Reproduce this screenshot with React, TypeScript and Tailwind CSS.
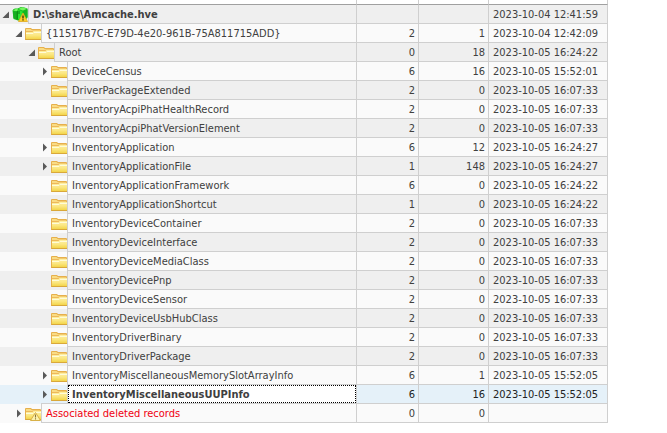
import React from "react";

type Kind = "hive" | "folder" | "deleted";

interface Entry {
  level: 0 | 1 | 2 | 3;
  name: string;
  values: string;
  subkeys: string;
  modified: string;
  kind?: Kind;
  state?: "open" | "closed";
  selected?: boolean;
}

const key = (
  name: string,
  values: string,
  subkeys: string,
  modified: string,
  extra: Partial<Entry> = {},
): Entry => ({ level: 3, name, values, subkeys, modified, ...extra });

const entries: Entry[] = [
  key("D:\\share\\Amcache.hve", "", "", "2023-10-04 12:41:59", { level: 0, kind: "hive", state: "open" }),
  key("{11517B7C-E79D-4e20-961B-75A811715ADD}", "2", "1", "2023-10-04 12:42:09", { level: 1, state: "open" }),
  key("Root", "0", "18", "2023-10-05 16:24:22", { level: 2, state: "open" }),
  key("DeviceCensus", "6", "16", "2023-10-05 15:52:01", { state: "closed" }),
  key("DriverPackageExtended", "2", "0", "2023-10-05 16:07:33"),
  key("InventoryAcpiPhatHealthRecord", "2", "0", "2023-10-05 16:07:33"),
  key("InventoryAcpiPhatVersionElement", "2", "0", "2023-10-05 16:07:33"),
  key("InventoryApplication", "6", "12", "2023-10-05 16:24:27", { state: "closed" }),
  key("InventoryApplicationFile", "1", "148", "2023-10-05 16:24:27", { state: "closed" }),
  key("InventoryApplicationFramework", "6", "0", "2023-10-05 16:24:22"),
  key("InventoryApplicationShortcut", "1", "0", "2023-10-05 16:24:22"),
  key("InventoryDeviceContainer", "2", "0", "2023-10-05 16:07:33"),
  key("InventoryDeviceInterface", "2", "0", "2023-10-05 16:07:33"),
  key("InventoryDeviceMediaClass", "2", "0", "2023-10-05 16:07:33"),
  key("InventoryDevicePnp", "2", "0", "2023-10-05 16:07:33"),
  key("InventoryDeviceSensor", "2", "0", "2023-10-05 16:07:33"),
  key("InventoryDeviceUsbHubClass", "2", "0", "2023-10-05 16:07:33"),
  key("InventoryDriverBinary", "2", "0", "2023-10-05 16:07:33"),
  key("InventoryDriverPackage", "2", "0", "2023-10-05 16:07:33"),
  key("InventoryMiscellaneousMemorySlotArrayInfo", "6", "1", "2023-10-05 15:52:05", { state: "closed" }),
  key("InventoryMiscellaneousUUPInfo", "6", "16", "2023-10-05 15:52:05", { state: "closed", selected: true }),
  key("Associated deleted records", "0", "0", "", { level: 1, kind: "deleted", state: "closed" }),
];

const indents = ["pl-0", "pl-[13px]", "pl-[26px]", "pl-[39px]"];

function Folder({ warning = false }: { warning?: boolean }) {
  return (
    <svg viewBox="0 0 16 16" className="mt-px size-4 shrink-0" aria-hidden="true">
      <defs>
        <linearGradient id="folderFront" x1="0" y1="0" x2="0" y2="1">
          <stop offset="0" stopColor="#fdf0a4" />
          <stop offset="0.5" stopColor="#fbe783" />
          <stop offset="1" stopColor="#f2d342" />
        </linearGradient>
      </defs>
      <path d="M0 4 Q0 3 1 3 H6 L7 4 H15 Q16 4 16 5 V15 H0 Z" fill="#e6b04c" />
      <path d="M1 5 V4 H5.5 L6.5 5 H15 V6 H1 Z" fill="#f9dc84" />
      <path d="M1 6 H7 L8 5.5 H16 V7 H1 Z" fill="#eeb75a" />
      <path d="M1 8 V7 H7.5 L8.5 6 H16 V14.5 H1 Z" fill="url(#folderFront)" />
      <path d="M1 8.5 H8 L9 7.5 H16" fill="none" stroke="#fffbd8" strokeWidth="1" />
      <path d="M0.5 14.5 H16" stroke="#d9a83a" strokeWidth="1" />
      {warning && (
        <>
          <path d="M10.5 7.5 L15.5 15.5 H5.5 Z" fill="#fdf3ae" stroke="#d8b148" strokeWidth="1" strokeLinejoin="round" />
          <path d="M10.5 9.5 V12.5 M10.5 13.3 V14.5" stroke="#8a7438" strokeWidth="1.1" />
        </>
      )}
    </svg>
  );
}

function Hive() {
  return (
    <svg viewBox="0 0 16 16" className="mt-px size-4 shrink-0" aria-hidden="true">
      <path d="M0.5 4.5 Q1 3 3 2.5 L5.5 2.5 L9 1 Q12 0.8 15.5 2.5 V12 L11 15 L6 14.5 L1.5 13 Z" fill="#19c321" />
      <path d="M1 4.5 L4 2.8 L6 3.3 L5 5.3 Z M6.5 3 L10 1.2 L15 2.8 L11 4.6 Z" fill="#78f560" />
      <path d="M1 5 L4.5 6 V13.5 L1.5 12 Z" fill="#18ad22" />
      <path d="M6 4 L10.5 5.5 V14 L6 13 Z" fill="#2be431" />
      <path d="M11 5.3 L15.5 3.2 V11 L11 14 Z" fill="#16b522" />
      <path d="M5.2 5 V13.5" fill="none" stroke="#077412" strokeWidth="0.9" />
      <path d="M7 5 V8" fill="none" stroke="#077412" strokeWidth="0.9" />
      <path d="M11 7 L15.5 15.5 H6.5 Z" fill="#ffd02a" stroke="#e0a81c" strokeWidth="0.8" strokeLinejoin="round" />
      <path d="M11 9.5 V12.6 M11 13.3 V14.6" stroke="#2c2508" strokeWidth="1.3" />
    </svg>
  );
}

function Expander({ state, name }: { state?: "open" | "closed"; name: string }) {
  if (!state) return <span className="w-3 shrink-0" />;
  return (
    <button
      type="button"
      aria-label={name}
      aria-expanded={state === "open"}
      className="mt-px flex w-3 shrink-0 items-center"
    >
      <svg viewBox="0 0 12 16" className="h-4 w-3" aria-hidden="true">
        {state === "open" ? (
          <path d="M9 5.5 V12 H2.5 Z" fill="#595959" />
        ) : (
          <path d="M4 4.5 L8 8.5 L4 12.5 Z" fill="#595959" />
        )}
      </svg>
    </button>
  );
}

function Row({ entry, striped }: { entry: Entry; striped: boolean }) {
  const { kind, selected } = entry;
  const background = selected ? "bg-[#e5f1f9] text-[#222]" : striped ? "bg-[#efefef]" : "bg-[#fafafa]";
  const frame = kind === "deleted" ? "-mt-px h-5 border-t border-b" : selected ? "h-[18px]" : "h-[19px] border-b";
  const label = selected
    ? "border border-dotted border-black bg-white pl-[3px] font-bold text-[#404040]"
    : kind === "deleted"
      ? "pt-px pl-1 text-[#f00010]"
      : kind === "hive"
        ? "pt-px pl-1 font-bold"
        : "pt-px pl-1";
  const cell = "border-r border-b border-[#cfcfcf] pt-px pb-0";

  return (
    <tr className={`h-[19px] ${background}`} aria-selected={selected}>
      <td className="border-r border-[#cfcfcf] p-0 align-top">
        <div className={`flex h-[19px] items-start ${indents[entry.level]}`}>
          <Expander state={entry.state} name={entry.name} />
          {kind === "hive" ? <Hive /> : <Folder warning={kind === "deleted"} />}
          <span className={`min-w-0 flex-1 border-l border-[#cfcfcf] whitespace-nowrap ${frame}`}>
            <span className={`block h-[18px] ${label}`}>{entry.name}</span>
          </span>
        </div>
      </td>
      <td className={`${cell} pl-0 pr-[3px] text-right`}>{entry.values}</td>
      <td className={`${cell} pl-0 pr-[3px] text-right`}>{entry.subkeys}</td>
      <td className={`${cell} whitespace-nowrap pr-0 pl-1`}>{entry.modified}</td>
    </tr>
  );
}

export default function App() {
  const head = "h-[5px] border-r border-r-[#cfcfcf] border-b border-b-[#a0a0a0] p-0";
  return (
    <main className="min-h-screen bg-white font-['DejaVu_Sans_Condensed',Tahoma,sans-serif] text-[11px] leading-[17px] text-[#404040]">
      <table className="w-[608px] table-fixed border-separate border-spacing-0">
        <colgroup>
          <col />
          <col className="w-[62px]" />
          <col className="w-[70px]" />
          <col className="w-[119px]" />
        </colgroup>
        <thead>
          <tr>
            <th className={head} />
            <th className={head} />
            <th className={head} />
            <th className={head} />
          </tr>
        </thead>
        <tbody>
          {entries.map((entry, index) => (
            <Row key={entry.name} entry={entry} striped={index % 2 === 0} />
          ))}
        </tbody>
      </table>
    </main>
  );
}
